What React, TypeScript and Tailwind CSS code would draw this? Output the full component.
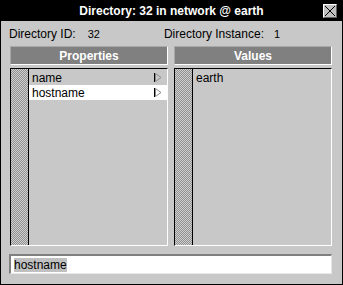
const font = { fontFamily: '"Liberation Sans", Arial, sans-serif' };

const Arrow = () => (
  <svg width="8" height="9" viewBox="0 0 8 9" className="shrink-0">
    <line x1="0.5" y1="0" x2="0.5" y2="9" stroke="#000" strokeWidth="1" />
    <polygon points="1.5,0.5 7,4.5 1.5,8.5" fill="none" stroke="#8a8a8a" strokeWidth="1" />
  </svg>
);

const stipple =
  'w-[18px] shrink-0 bg-[repeating-conic-gradient(#909090_0_25%,#d0d0d0_0_50%)] bg-[length:2px_2px] border-r border-black';

const Header = ({ label }: { label: string }) => (
  <div className="h-[19px] flex items-center justify-center bg-[#808080] border border-t-[#a8a8a8] border-l-[#a8a8a8] border-r-white border-b-white text-white font-bold text-[12px] leading-none">
    {label}
  </div>
);

const List = ({ children }: { children?: React.ReactNode }) => (
  <div className="mt-[3px] h-[178px] flex border border-t-black border-l-black border-r-white border-b-white">
    <div className={stipple} />
    <div className="flex-1 flex flex-col pt-[1px]">{children}</div>
  </div>
);

const Row = ({ label, selected, arrow }: { label: string; selected?: boolean; arrow?: boolean }) => (
  <div className={`h-[15px] flex items-center justify-between pl-[3px] pr-[5px] text-[12px] leading-none text-black ${selected ? 'bg-white' : ''}`}>
    <span>{label}</span>
    {arrow && <Arrow />}
  </div>
);

export default function App() {
  return (
    <div className="w-[343px] h-[285px] flex flex-col bg-[#c8c8c8] border border-black" style={font}>
      <div className="relative h-[20px] bg-black flex items-center justify-center">
        <span className="text-white font-bold text-[12px] leading-none">Directory: 32 in network @ earth</span>
        <div className="absolute right-[5px] top-[3px] w-[14px] h-[14px] bg-[#c0c0c0] border border-t-white border-l-white border-r-[#606060] border-b-[#606060] flex items-center justify-center">
          <svg width="12" height="12" viewBox="0 0 12 12">
            <path d="M1 1 L11 11 M11 1 L1 11" stroke="#000" strokeWidth="1" />
          </svg>
        </div>
      </div>

      <div className="h-[25px] flex pt-[6px] pl-[8px] text-[12px] leading-[14px] text-black">
        <span>Directory ID:</span>
        <span className="ml-[12px] text-[11px]">32</span>
        <span className="ml-[64px]">Directory Instance:</span>
        <span className="ml-[10px] text-[11px]">1</span>
      </div>

      <div className="grid grid-cols-2 gap-[6px] pl-[9px] pr-[10px]">
        <div className="flex flex-col">
          <Header label="Properties" />
          <List>
            <Row label="name" arrow />
            <Row label="hostname" arrow selected />
          </List>
        </div>
        <div className="flex flex-col">
          <Header label="Values" />
          <List>
            <Row label="earth" />
          </List>
        </div>
      </div>

      <div className="mt-[8px] ml-[8px] mr-[10px] h-[20px] flex items-center bg-white border-t-2 border-l-2 border-t-[#808080] border-l-[#808080] border-r border-b border-r-[#e8e8e8] border-b-[#e8e8e8] pl-[3px]">
        <span className="bg-[#c0c0c0] text-[12px] leading-[14px] text-black">hostname</span>
      </div>
    </div>
  );
}
